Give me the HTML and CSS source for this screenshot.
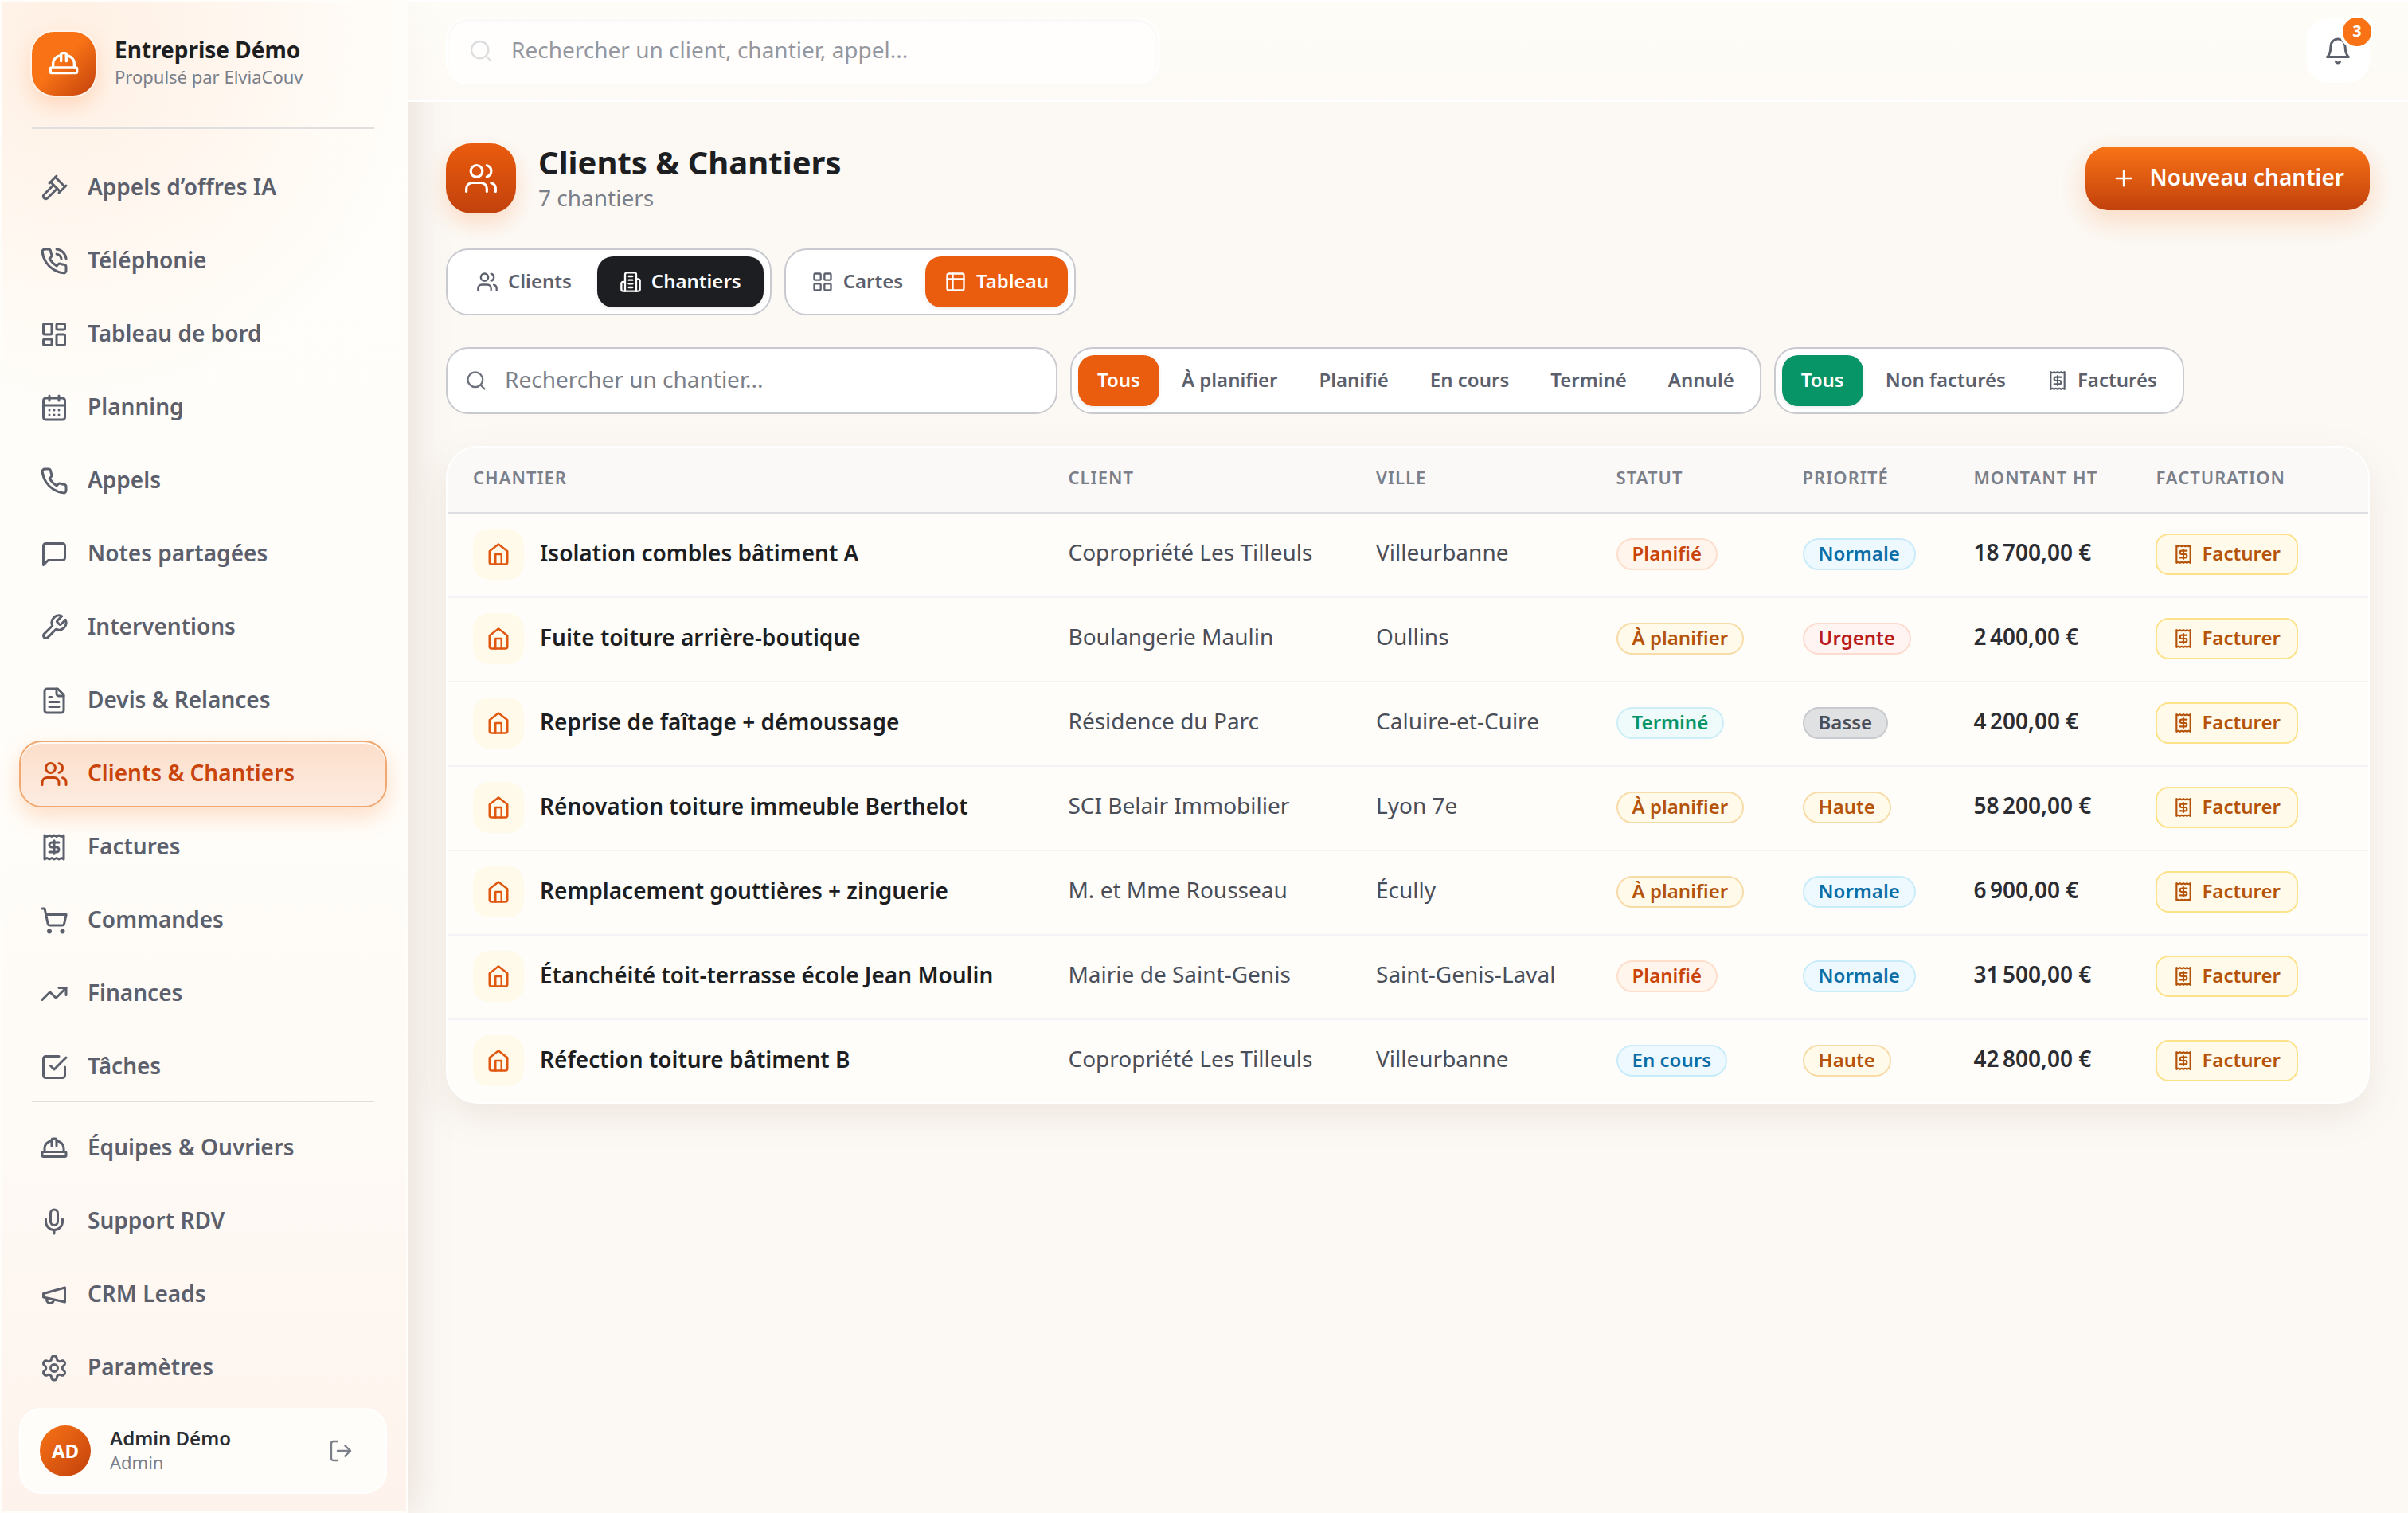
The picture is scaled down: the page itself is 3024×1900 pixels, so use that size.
FILE: index.html
```html
<!DOCTYPE html>
<html lang="fr">
<head>
  <meta charset="UTF-8">
  <title>Clients &amp; Chantiers</title>
  <meta name="viewport" content="width=device-width, initial-scale=1.0">
  <link rel="stylesheet" href="styles.css">
</head>
<body>

<!-- Icônes partagées -->
<svg class="sprite" aria-hidden="true">
  <symbol id="i-hat" viewBox="0 0 24 24"><path d="M2 18a1 1 0 0 0 1 1h18a1 1 0 0 0 1-1v-2a1 1 0 0 0-1-1H3a1 1 0 0 0-1 1v2z"/><path d="M10 10V5a1 1 0 0 1 1-1h2a1 1 0 0 1 1 1v5"/><path d="M4 15v-3a6 6 0 0 1 6-6"/><path d="M14 6a6 6 0 0 1 6 6v3"/></symbol>
  <symbol id="i-gavel" viewBox="0 0 24 24"><path d="m14.5 12.5-8 8a2.119 2.119 0 1 1-3-3l8-8"/><path d="m16 16 6-6"/><path d="m8 8 6-6"/><path d="m9 7 8 8"/><path d="m21 11-8-8"/></symbol>
  <symbol id="i-phone" viewBox="0 0 24 24"><path d="M22 16.92v3a2 2 0 0 1-2.18 2 19.79 19.79 0 0 1-8.63-3.07 19.5 19.5 0 0 1-6-6 19.79 19.79 0 0 1-3.07-8.67A2 2 0 0 1 4.11 2h3a2 2 0 0 1 2 1.72 12.84 12.84 0 0 0 .7 2.81 2 2 0 0 1-.45 2.11L8.09 9.91a16 16 0 0 0 6 6l1.27-1.27a2 2 0 0 1 2.11-.45 12.84 12.84 0 0 0 2.81.7A2 2 0 0 1 22 16.92z"/></symbol>
  <symbol id="i-call" viewBox="0 0 24 24"><path d="M22 16.92v3a2 2 0 0 1-2.18 2 19.79 19.79 0 0 1-8.63-3.07 19.5 19.5 0 0 1-6-6 19.79 19.79 0 0 1-3.07-8.67A2 2 0 0 1 4.11 2h3a2 2 0 0 1 2 1.72 12.84 12.84 0 0 0 .7 2.81 2 2 0 0 1-.45 2.11L8.09 9.91a16 16 0 0 0 6 6l1.27-1.27a2 2 0 0 1 2.11-.45 12.84 12.84 0 0 0 2.81.7A2 2 0 0 1 22 16.92z"/><path d="M14.05 2a9 9 0 0 1 8 7.94"/><path d="M14.05 6A5 5 0 0 1 18 10"/></symbol>
  <symbol id="i-dashboard" viewBox="0 0 24 24"><rect x="3" y="3" width="7" height="9" rx="1"/><rect x="14" y="3" width="7" height="5" rx="1"/><rect x="14" y="12" width="7" height="9" rx="1"/><rect x="3" y="16" width="7" height="5" rx="1"/></symbol>
  <symbol id="i-calendar" viewBox="0 0 24 24"><path d="M8 2v4"/><path d="M16 2v4"/><rect x="3" y="4" width="18" height="18" rx="2"/><path d="M3 10h18"/><path d="M8 14h.01"/><path d="M12 14h.01"/><path d="M16 14h.01"/><path d="M8 18h.01"/><path d="M12 18h.01"/><path d="M16 18h.01"/></symbol>
  <symbol id="i-message" viewBox="0 0 24 24"><path d="M21 15a2 2 0 0 1-2 2H7l-4 4V5a2 2 0 0 1 2-2h14a2 2 0 0 1 2 2z"/></symbol>
  <symbol id="i-wrench" viewBox="0 0 24 24"><path d="M14.7 6.3a1 1 0 0 0 0 1.4l1.6 1.6a1 1 0 0 0 1.4 0l3.77-3.77a6 6 0 0 1-7.94 7.94l-6.91 6.91a2.12 2.12 0 0 1-3-3l6.91-6.91a6 6 0 0 1 7.94-7.94l-3.76 3.76z"/></symbol>
  <symbol id="i-file" viewBox="0 0 24 24"><path d="M15 2H6a2 2 0 0 0-2 2v16a2 2 0 0 0 2 2h12a2 2 0 0 0 2-2V7Z"/><path d="M14 2v4a2 2 0 0 0 2 2h4"/><path d="M10 9H8"/><path d="M16 13H8"/><path d="M16 17H8"/></symbol>
  <symbol id="i-users" viewBox="0 0 24 24"><path d="M16 21v-2a4 4 0 0 0-4-4H6a4 4 0 0 0-4 4v2"/><circle cx="9" cy="7" r="4"/><path d="M22 21v-2a4 4 0 0 0-3-3.87"/><path d="M16 3.13a4 4 0 0 1 0 7.75"/></symbol>
  <symbol id="i-receipt" viewBox="0 0 24 24"><path d="M4 2v20l2-1 2 1 2-1 2 1 2-1 2 1 2-1 2 1V2l-2 1-2-1-2 1-2-1-2 1-2-1-2 1Z"/><path d="M16 8h-6a2 2 0 1 0 0 4h4a2 2 0 1 1 0 4H8"/><path d="M12 17.5v-11"/></symbol>
  <symbol id="i-cart" viewBox="0 0 24 24"><circle cx="8" cy="21" r="1"/><circle cx="19" cy="21" r="1"/><path d="M2.05 2.05h2l2.66 12.42a2 2 0 0 0 2 1.58h9.78a2 2 0 0 0 1.95-1.57l1.65-7.43H5.12"/></symbol>
  <symbol id="i-trend" viewBox="0 0 24 24"><path d="m22 7-8.5 8.5-5-5L2 17"/><path d="M16 7h6v6"/></symbol>
  <symbol id="i-check" viewBox="0 0 24 24"><path d="m9 11 3 3L22 4"/><path d="M21 12v7a2 2 0 0 1-2 2H5a2 2 0 0 1-2-2V5a2 2 0 0 1 2-2h11"/></symbol>
  <symbol id="i-mic" viewBox="0 0 24 24"><path d="M12 2a3 3 0 0 0-3 3v7a3 3 0 0 0 6 0V5a3 3 0 0 0-3-3Z"/><path d="M19 10v2a7 7 0 0 1-14 0v-2"/><path d="M12 19v3"/></symbol>
  <symbol id="i-megaphone" viewBox="0 0 24 24"><path d="m3 11 18-5v12L3 14v-3z"/><path d="M11.6 16.8a3 3 0 1 1-5.8-1.6"/></symbol>
  <symbol id="i-settings" viewBox="0 0 24 24"><path d="M12.22 2h-.44a2 2 0 0 0-2 2v.18a2 2 0 0 1-1 1.73l-.43.25a2 2 0 0 1-2 0l-.15-.08a2 2 0 0 0-2.73.73l-.22.38a2 2 0 0 0 .73 2.73l.15.1a2 2 0 0 1 1 1.72v.51a2 2 0 0 1-1 1.74l-.15.09a2 2 0 0 0-.73 2.73l.22.38a2 2 0 0 0 2.73.73l.15-.08a2 2 0 0 1 2 0l.43.25a2 2 0 0 1 1 1.73V20a2 2 0 0 0 2 2h.44a2 2 0 0 0 2-2v-.18a2 2 0 0 1 1-1.73l.43-.25a2 2 0 0 1 2 0l.15.08a2 2 0 0 0 2.73-.73l.22-.39a2 2 0 0 0-.73-2.73l-.15-.08a2 2 0 0 1-1-1.74v-.5a2 2 0 0 1 1-1.74l.15-.09a2 2 0 0 0 .73-2.73l-.22-.38a2 2 0 0 0-2.73-.73l-.15.08a2 2 0 0 1-2 0l-.43-.25a2 2 0 0 1-1-1.73V4a2 2 0 0 0-2-2z"/><circle cx="12" cy="12" r="3"/></symbol>
  <symbol id="i-logout" viewBox="0 0 24 24"><path d="M9 21H5a2 2 0 0 1-2-2V5a2 2 0 0 1 2-2h4"/><path d="m16 17 5-5-5-5"/><path d="M21 12H9"/></symbol>
  <symbol id="i-search" viewBox="0 0 24 24"><circle cx="11" cy="11" r="8"/><path d="m21 21-4.3-4.3"/></symbol>
  <symbol id="i-bell" viewBox="0 0 24 24"><path d="M6 8a6 6 0 0 1 12 0c0 7 3 9 3 9H3s3-2 3-9"/><path d="M10.3 21a1.94 1.94 0 0 0 3.4 0"/></symbol>
  <symbol id="i-plus" viewBox="0 0 24 24"><path d="M5 12h14"/><path d="M12 5v14"/></symbol>
  <symbol id="i-building" viewBox="0 0 24 24"><path d="M6 22V4a2 2 0 0 1 2-2h8a2 2 0 0 1 2 2v18Z"/><path d="M6 12H4a2 2 0 0 0-2 2v6a2 2 0 0 0 2 2h2"/><path d="M18 9h2a2 2 0 0 1 2 2v9a2 2 0 0 1-2 2h-2"/><path d="M10 6h4"/><path d="M10 10h4"/><path d="M10 14h4"/><path d="M10 18h4"/></symbol>
  <symbol id="i-grid" viewBox="0 0 24 24"><rect x="3" y="3" width="7" height="7" rx="1"/><rect x="14" y="3" width="7" height="7" rx="1"/><rect x="14" y="14" width="7" height="7" rx="1"/><rect x="3" y="14" width="7" height="7" rx="1"/></symbol>
  <symbol id="i-table" viewBox="0 0 24 24"><rect x="3" y="3" width="18" height="18" rx="2"/><path d="M3 9h18"/><path d="M9 3v18"/></symbol>
  <symbol id="i-house" viewBox="0 0 24 24"><path d="m3 9 9-7 9 7v11a2 2 0 0 1-2 2H5a2 2 0 0 1-2-2z"/><path d="M9 22V12h6v10"/></symbol>
</svg>

<div class="app">
  <aside class="sidebar">
    <div class="brand">
      <span class="brand-logo"><svg class="icon icon-40"><use href="#i-hat"/></svg></span>
      <div class="brand-text">
        <div class="brand-name">Entreprise Démo</div>
        <div class="brand-sub">Propulsé par ElviaCouv</div>
      </div>
    </div>

    <nav class="nav">
      <a class="nav-item" href="#"><svg class="icon icon-36"><use href="#i-gavel"/></svg><span>Appels d’offres IA</span></a>
      <a class="nav-item" href="#"><svg class="icon icon-36"><use href="#i-call"/></svg><span>Téléphonie</span></a>
      <a class="nav-item" href="#"><svg class="icon icon-36"><use href="#i-dashboard"/></svg><span>Tableau de bord</span></a>
      <a class="nav-item" href="#"><svg class="icon icon-36"><use href="#i-calendar"/></svg><span>Planning</span></a>
      <a class="nav-item" href="#"><svg class="icon icon-36"><use href="#i-phone"/></svg><span>Appels</span></a>
      <a class="nav-item" href="#"><svg class="icon icon-36"><use href="#i-message"/></svg><span>Notes partagées</span></a>
      <a class="nav-item" href="#"><svg class="icon icon-36"><use href="#i-wrench"/></svg><span>Interventions</span></a>
      <a class="nav-item" href="#"><svg class="icon icon-36"><use href="#i-file"/></svg><span>Devis &amp; Relances</span></a>
      <a class="nav-item active" href="#"><svg class="icon icon-36"><use href="#i-users"/></svg><span>Clients &amp; Chantiers</span></a>
      <a class="nav-item" href="#"><svg class="icon icon-36"><use href="#i-receipt"/></svg><span>Factures</span></a>
      <a class="nav-item" href="#"><svg class="icon icon-36"><use href="#i-cart"/></svg><span>Commandes</span></a>
      <a class="nav-item" href="#"><svg class="icon icon-36"><use href="#i-trend"/></svg><span>Finances</span></a>
      <a class="nav-item" href="#"><svg class="icon icon-36"><use href="#i-check"/></svg><span>Tâches</span></a>
    </nav>

    <nav class="nav nav-bottom">
      <a class="nav-item" href="#"><svg class="icon icon-36"><use href="#i-hat"/></svg><span>Équipes &amp; Ouvriers</span></a>
      <a class="nav-item" href="#"><svg class="icon icon-36"><use href="#i-mic"/></svg><span>Support RDV</span></a>
      <a class="nav-item" href="#"><svg class="icon icon-36"><use href="#i-megaphone"/></svg><span>CRM Leads</span></a>
      <a class="nav-item" href="#"><svg class="icon icon-36"><use href="#i-settings"/></svg><span>Paramètres</span></a>
    </nav>

    <div class="user">
      <span class="avatar">AD</span>
      <div class="user-text">
        <div class="user-name">Admin Démo</div>
        <div class="user-role">Admin</div>
      </div>
      <button class="logout" type="button" aria-label="Déconnexion"><svg class="icon icon-32"><use href="#i-logout"/></svg></button>
    </div>
  </aside>

  <div class="main">
    <header class="topbar">
      <label class="search search-top">
        <svg class="icon icon-32"><use href="#i-search"/></svg>
        <input type="search" placeholder="Rechercher un client, chantier, appel..." aria-label="Recherche globale">
      </label>
      <button class="bell" type="button" aria-label="Notifications">
        <svg class="icon icon-36"><use href="#i-bell"/></svg>
        <span class="bell-count">3</span>
      </button>
    </header>

    <main class="content">
      <div class="page-head">
        <span class="page-icon"><svg class="icon icon-44"><use href="#i-users"/></svg></span>
        <div class="page-title">
          <h1>Clients &amp; Chantiers</h1>
          <p>7 chantiers</p>
        </div>
        <button class="btn-primary" type="button"><svg class="icon icon-32"><use href="#i-plus"/></svg><span>Nouveau chantier</span></button>
      </div>

      <div class="row">
        <div class="segment segment-wide">
          <button type="button"><svg class="icon icon-28"><use href="#i-users"/></svg><span>Clients</span></button>
          <button type="button" class="on-dark"><svg class="icon icon-28"><use href="#i-building"/></svg><span>Chantiers</span></button>
        </div>
        <div class="segment">
          <button type="button"><svg class="icon icon-28"><use href="#i-grid"/></svg><span>Cartes</span></button>
          <button type="button" class="on-orange"><svg class="icon icon-28"><use href="#i-table"/></svg><span>Tableau</span></button>
        </div>
      </div>

      <div class="row">
        <label class="search search-list">
          <svg class="icon icon-28"><use href="#i-search"/></svg>
          <input type="search" placeholder="Rechercher un chantier..." aria-label="Rechercher un chantier">
        </label>
        <div class="segment">
          <button type="button" class="on-orange"><span>Tous</span></button>
          <button type="button"><span>À planifier</span></button>
          <button type="button"><span>Planifié</span></button>
          <button type="button"><span>En cours</span></button>
          <button type="button"><span>Terminé</span></button>
          <button type="button"><span>Annulé</span></button>
        </div>
        <div class="segment">
          <button type="button" class="on-green"><span>Tous</span></button>
          <button type="button"><span>Non facturés</span></button>
          <button type="button"><svg class="icon icon-26"><use href="#i-receipt"/></svg><span>Facturés</span></button>
        </div>
      </div>

      <div class="card">
        <table>
          <thead>
            <tr><th>Chantier</th><th>Client</th><th>Ville</th><th>Statut</th><th>Priorité</th><th>Montant HT</th><th>Facturation</th><th class="end"></th></tr>
          </thead>
          <tbody id="rows"></tbody>
        </table>
      </div>
    </main>
  </div>
</div>

<script>
  const chantiers = [
    ["Isolation combles bâtiment A", "Copropriété Les Tilleuls", "Villeurbanne", "Planifié", "Normale", 18700],
    ["Fuite toiture arrière-boutique", "Boulangerie Maulin", "Oullins", "À planifier", "Urgente", 2400],
    ["Reprise de faîtage + démoussage", "Résidence du Parc", "Caluire-et-Cuire", "Terminé", "Basse", 4200],
    ["Rénovation toiture immeuble Berthelot", "SCI Belair Immobilier", "Lyon 7e", "À planifier", "Haute", 58200],
    ["Remplacement gouttières + zinguerie", "M. et Mme Rousseau", "Écully", "À planifier", "Normale", 6900],
    ["Étanchéité toit-terrasse école Jean Moulin", "Mairie de Saint-Genis", "Saint-Genis-Laval", "Planifié", "Normale", 31500],
    ["Réfection toiture bâtiment B", "Copropriété Les Tilleuls", "Villeurbanne", "En cours", "Haute", 42800]
  ];

  const tones = {
    "Planifié": "orange",
    "À planifier": "amber",
    "Terminé": "green",
    "En cours": "blue",
    "Normale": "blue",
    "Urgente": "red",
    "Basse": "grey",
    "Haute": "amber"
  };

  function badge(label) {
    return `<span class="badge ${tones[label]}"><span>${label}</span></span>`;
  }

  // 18700 -> 18 700,00 €
  function euros(n) {
    return String(n).replace(/(\d{3})$/, "\u202f$1") + ",00\u00a0€";
  }

  document.getElementById("rows").innerHTML = chantiers.map(c => `
    <tr>
      <td class="boxed"><div class="site"><span class="site-icon"><svg class="icon icon-30"><use href="#i-house"/></svg></span><span class="site-name">${c[0]}</span></div></td>
      <td>${c[1]}</td>
      <td>${c[2]}</td>
      <td class="boxed">${badge(c[3])}</td>
      <td class="boxed">${badge(c[4])}</td>
      <td class="amount">${euros(c[5])}</td>
      <td class="boxed"><button class="btn-bill" type="button"><svg class="icon icon-26"><use href="#i-receipt"/></svg><span>Facturer</span></button></td>
      <td class="end"></td>
    </tr>`).join("");
</script>

</body>
</html>
```
FILE: styles.css
```css
* {
  box-sizing: border-box;
}

body {
  margin: 0;
  font-family: "Noto Sans", sans-serif;
  font-size: 28px;
  line-height: 40px;
  color: #1c1e22;
  background: #fcf9f5;
}

button,
input {
  font-family: inherit;
  font-size: inherit;
  line-height: inherit;
  color: inherit;
}

button {
  border: none;
  background: none;
  padding: 0;
  cursor: pointer;
  white-space: nowrap;
}

.sprite {
  display: none;
}

.icon {
  flex: none;
  display: block;
  width: 32px;
  height: 32px;
  fill: none;
  stroke: currentColor;
  stroke-width: 1.75;
  stroke-linecap: round;
  stroke-linejoin: round;
}

.icon-26 { width: 26px; height: 26px; stroke-width: 2; }
.icon-28 { width: 28px; height: 28px; stroke-width: 2; }
.icon-30 { width: 30px; height: 30px; stroke-width: 2; }
.icon-36 { width: 36px; height: 36px; stroke-width: 2; }
.icon-40 { width: 40px; height: 40px; stroke-width: 2; }
.icon-44 { width: 44px; height: 44px; }

/* Libellés : remontés pour un centrage optique avec les icônes */
.nav-item span,
.btn-primary span,
.site-name,
.brand-text,
.search input {
  padding: 0 0 4px;
}

.segment span,
.badge span,
.btn-bill span,
.user-text {
  padding-bottom: 2px;
}

.app {
  display: flex;
  min-height: 100vh;
}

/* Barre latérale */
.sidebar {
  flex: none;
  display: flex;
  flex-direction: column;
  width: 512px;
  padding: 0 24px 22px 22px;
  border: 2px solid #fffdfa;
  background:
    radial-gradient(ellipse 460px 480px at 80px 40px, rgba(255, 226, 205, 0.5), rgba(255, 226, 205, 0)),
    linear-gradient(180deg, #fffefb 0%, #fffdf9 55%, #fefaf6 75%, #fef3ec 100%);
  box-shadow: 8px 0 48px rgba(120, 70, 40, 0.14);
}

.brand {
  display: flex;
  align-items: center;
  gap: 24px;
  margin: 0 16px;
  padding: 38px 0 40px;
  border-bottom: 2px solid #e0dfdf;
}

.brand-logo {
  display: grid;
  place-items: center;
  width: 80px;
  height: 80px;
  border-radius: 28px;
  color: #fff;
  background: linear-gradient(135deg, #f97316 0%, #f97316 45%, #c2410c 100%);
  box-shadow: 0 0 0 2px rgba(255, 255, 255, 0.5), 0 12px 28px rgba(249, 115, 22, 0.22);
}

.brand-name {
  font-weight: 700;
  line-height: 36px;
}

.brand-sub {
  font-size: 22px;
  line-height: 32px;
  color: #7b7f89;
}

.nav {
  display: flex;
  flex-direction: column;
  gap: 8px;
  padding-top: 32px;
}

.nav-bottom {
  margin-bottom: 8px;
  padding-top: 16px;
}

.nav-bottom::before {
  content: "";
  height: 2px;
  margin: -16px 16px 8px;
  background: #e0dfdf;
}

.nav-item {
  display: flex;
  align-items: center;
  gap: 24px;
  height: 84px;
  padding: 0 24px;
  border: 2px solid transparent;
  border-radius: 28px;
  font-weight: 600;
  color: #5b606c;
  text-decoration: none;
}

.nav-item.active {
  color: #c9440b;
  border-color: #f0a870;
  background: linear-gradient(180deg, #fcdeca, #fdece1);
  box-shadow: inset 0 2px 0 rgba(255, 255, 255, 0.8), 0 12px 28px rgba(249, 115, 22, 0.22);
}

.user {
  display: flex;
  align-items: center;
  gap: 24px;
  height: 108px;
  padding: 0 24px;
  border: 2px solid #fff;
  border-radius: 28px;
  background: #fffdf9;
}

.avatar {
  display: grid;
  place-items: center;
  width: 64px;
  height: 64px;
  border-radius: 50%;
  font-size: 24px;
  font-weight: 700;
  color: #fff;
  background: linear-gradient(135deg, #f97316, #c2410c);
}

.user-text {
  flex: 1;
}

.user-name {
  font-size: 24px;
  font-weight: 600;
  line-height: 30px;
  color: #2b2d33;
}

.user-role {
  font-size: 22px;
  line-height: 30px;
  color: #7b7f89;
}

.logout {
  padding: 16px;
  color: #7b7f89;
}

/* Colonne principale */
.main {
  flex: 1;
  min-width: 0;
}

.topbar {
  display: flex;
  align-items: center;
  justify-content: space-between;
  height: 128px;
  padding: 0 48px;
  border-top: 2px solid #fff;
  border-bottom: 2px solid #fff;
  background: linear-gradient(180deg, rgba(255, 254, 248, 0.75), rgba(254, 251, 247, 0.75));
}

.search {
  display: flex;
  align-items: center;
  gap: 22px;
  height: 84px;
  border-radius: 28px;
}

.search input {
  flex: 1;
  min-width: 0;
  border: none;
  outline: none;
  background: none;
}

.search-top {
  width: 896px;
  padding: 0 26px;
  border: 2px solid #fff;
  background: rgba(255, 255, 255, 0.75);
  box-shadow: inset 0 2px 4px rgba(0, 0, 0, 0.04);
}

.search-top .icon {
  color: #dcdddf;
}

.search-top input::placeholder {
  color: #94979f;
}

.search-list {
  width: 768px;
  padding: 0 22px;
  border: 2px solid #c9cacf;
  background: #fff;
}

.search-list .icon {
  color: #6d717b;
}

.search-list input::placeholder {
  color: #7b7f89;
}

.bell {
  position: relative;
  display: grid;
  place-items: center;
  width: 80px;
  height: 80px;
  border-radius: 28px;
  color: #5b606c;
  background: #fff;
}

.bell-count {
  position: absolute;
  top: -2px;
  right: -2px;
  width: 36px;
  height: 36px;
  border-radius: 50%;
  font-size: 20px;
  font-weight: 700;
  line-height: 34px;
  color: #fff;
  background: #f97316;
  box-shadow: 0 0 0 4px #fff;
}

.content {
  display: flex;
  flex-direction: column;
  gap: 40px;
  padding: 48px;
}

.page-head {
  display: flex;
  align-items: center;
  gap: 28px;
  margin: 4px 0;
}

.page-icon {
  display: grid;
  place-items: center;
  width: 88px;
  height: 88px;
  border-radius: 32px;
  color: #fff;
  background: linear-gradient(180deg, #ea5c0e, #c2410c);
  box-shadow: 0 12px 28px rgba(249, 115, 22, 0.22);
}

.page-title {
  flex: 1;
}

.page-title h1 {
  margin: 0;
  font-size: 40px;
  font-weight: 700;
  line-height: 48px;
}

.page-title p {
  margin: 0;
  color: #7b7f89;
}

.btn-primary {
  display: flex;
  align-items: center;
  gap: 16px;
  height: 80px;
  padding: 0 32px;
  border-radius: 28px;
  font-weight: 600;
  color: #fff;
  background: linear-gradient(180deg, #f97316, #c2410c);
  box-shadow: 0 12px 36px rgba(249, 115, 22, 0.25);
}

.row {
  display: flex;
  gap: 16px;
}

.segment {
  display: flex;
  gap: 4px;
  padding: 8px;
  border: 2px solid #c9cacf;
  border-radius: 28px;
  background: #fff;
}

.segment button {
  display: flex;
  align-items: center;
  gap: 12px;
  height: 64px;
  padding: 0 24px;
  border-radius: 20px;
  font-size: 24px;
  font-weight: 600;
  color: #5b606c;
}

.segment-wide button {
  padding: 0 28px;
}

.segment .on-dark,
.segment .on-orange,
.segment .on-green {
  color: #fff;
  box-shadow: 0 2px 4px rgba(0, 0, 0, 0.08);
}

.segment .on-dark { background: #1c1e22; }
.segment .on-orange { background: #ea5c0e; }
.segment .on-green { background: #079467; }

/* Tableau des chantiers */
.card {
  overflow: hidden;
  border: 2px solid #fff;
  border-radius: 40px;
  background: #fffdfa;
  box-shadow: 0 16px 48px rgba(120, 70, 40, 0.1);
}

table {
  width: 100%;
  border-collapse: collapse;
}

th {
  height: 82px;
  padding: 0 32px 8px;
  border-bottom: 2px solid #dedfe1;
  font-size: 22px;
  font-weight: 600;
  letter-spacing: 1px;
  text-align: left;
  text-transform: uppercase;
  white-space: nowrap;
  color: #7b7f89;
  background: #faf9f8;
}

td {
  height: 106px;
  padding: 0 32px 8px;
  border-bottom: 2px solid #f4f4f6;
  white-space: nowrap;
  color: #4a4e58;
}

td.boxed {
  padding-bottom: 2px;
}

tbody tr:last-child td {
  height: 104px;
  border-bottom: none;
}

th.end,
td.end {
  padding: 0 22px;
}

.site {
  display: flex;
  align-items: center;
  gap: 20px;
}

.site-icon {
  display: grid;
  place-items: center;
  width: 64px;
  height: 64px;
  border-radius: 20px;
  color: #e0570f;
  background: #fffaea;
}

.site-name {
  font-weight: 600;
  color: #1c1e22;
}

.amount {
  font-weight: 600;
  color: #2b2d33;
}

.badge {
  display: flex;
  align-items: center;
  width: fit-content;
  height: 40px;
  padding: 0 18px;
  border: 2px solid;
  border-radius: 20px;
  font-size: 24px;
  font-weight: 600;
}

.badge.orange { color: #c9440b; background: #fff5ed; border-color: #fddfcc; }
.badge.amber { color: #b45309; background: #fffaea; border-color: #f8dca8; }
.badge.green { color: #079467; background: #effafb; border-color: #cdeef6; }
.badge.blue { color: #0c6ea6; background: #eef9ff; border-color: #c9ecfa; }
.badge.red { color: #b91c1c; background: #fff4f1; border-color: #fddccf; }
.badge.grey { color: #4a4e58; background: #e0e1e2; border-color: #c9cacf; }

.btn-bill {
  display: flex;
  align-items: center;
  gap: 10px;
  height: 52px;
  padding: 0 20px;
  border: 2px solid #fde28a;
  border-radius: 16px;
  font-size: 24px;
  font-weight: 600;
  color: #b45309;
  background: #fffaea;
}
```
